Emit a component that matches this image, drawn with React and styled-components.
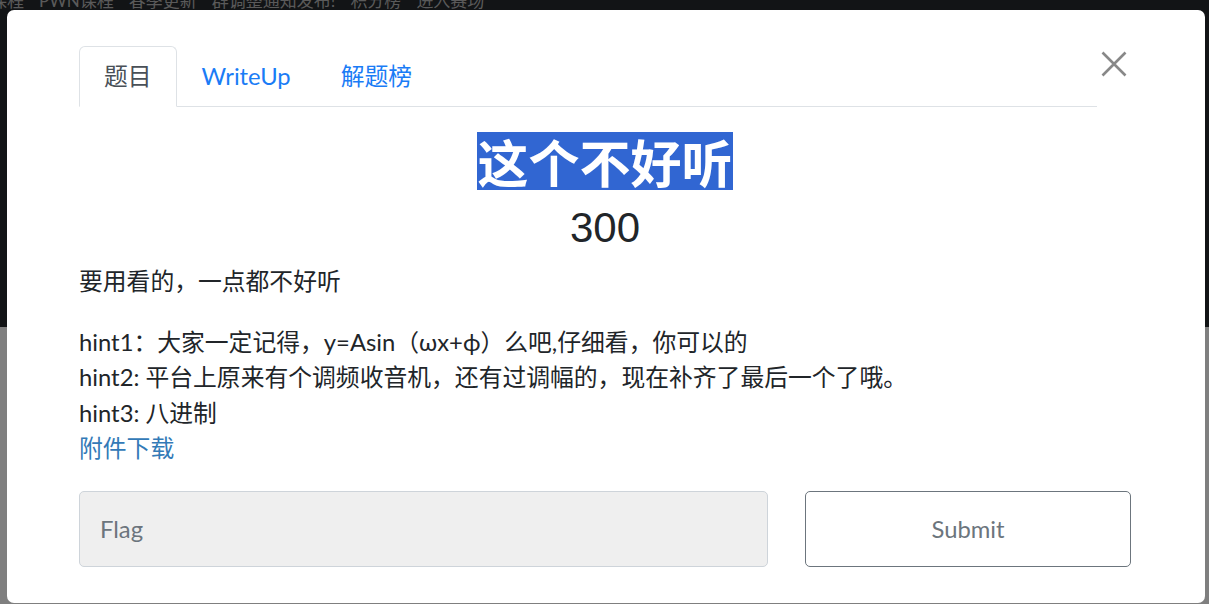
import React from 'react'
import styled, { createGlobalStyle } from 'styled-components'

const GlobalStyle = createGlobalStyle`
    html,
    body {
        margin: 0;
        padding: 0;
        height: 100%;
        overflow: hidden;
    }

    body {
        font-family: Lato, 'Noto Sans CJK SC', sans-serif;
        color: #212529;
        background: #ffffff;
    }
`

const Page = styled.div`
    height: 100vh;
    display: flex;
    flex-direction: column;
`

const Header = styled.header`
    height: 327px;
    background: #24282c;
    overflow: hidden;
`

const NavBar = styled.nav`
    display: flex;
    gap: 15px;
    margin: -8px 0 0 -10px;
    font-size: 17px;
    line-height: 17px;
    color: #b4b4b4;
`

const PageBody = styled.main`
    flex: 1;
    background: #ffffff;
`

const Backdrop = styled.div`
    position: fixed;
    inset: 0;
    background: rgba(0, 0, 0, 0.5);
`

const ModalWrap = styled.div`
    position: fixed;
    inset: 0;
    padding: 10px 4px 0 7px;
`

const Modal = styled.div`
    background: #ffffff;
    border-radius: 7px;
    padding: 36px 74px 36px 72px;
`

const ModalHeader = styled.div`
    display: flex;
    align-items: flex-start;
`

const TabList = styled.ul`
    flex: 1;
    display: flex;
    list-style: none;
    margin: 0;
    padding: 0;
    border-bottom: 1px solid #dee2e6;
`

const Tab = styled.li`
    margin-bottom: -1px;
    padding: 12px 24px;
    font-size: 23.8px;
    line-height: 35px;
    border: 1px solid transparent;
    border-radius: 6px 6px 0 0;
    color: ${(p) => (p.$active ? '#495057' : '#1a7cf6')};
    background: ${(p) => (p.$active ? '#ffffff' : 'transparent')};
    border-color: ${(p) => (p.$active ? '#dee2e6 #dee2e6 #ffffff' : 'transparent')};
    cursor: pointer;
`

const CloseButton = styled.button`
    width: 34px;
    height: 36px;
    padding: 0;
    border: 0;
    background: none;
    display: flex;
    align-items: center;
    justify-content: center;
    cursor: pointer;
`

const Title = styled.h2`
    margin: 25px 0 0;
    text-align: center;
    font-size: 51px;
    line-height: 58px;
    font-weight: 700;
    font-family: 'Noto Sans CJK SC', sans-serif;
`

const Highlight = styled.span`
    display: inline-block;
    vertical-align: top;
    background: #3166d2;
    color: #ffffff;
`

const Score = styled.div`
    margin-top: 12.5px;
    text-align: center;
    font-family: 'Liberation Sans', Arial, sans-serif;
    font-size: 42px;
    line-height: 50px;
    color: #212529;
`

const Description = styled.p`
    margin: 11px 0 0;
    font-size: 23.8px;
    line-height: 35px;
`

const Hints = styled.div`
    margin-top: 26px;
    font-size: 23.8px;
    line-height: 35.5px;
`

const Line = styled.div``

const Download = styled.a`
    display: block;
    color: #337ab7;
    text-decoration: none;
`

const FlagForm = styled.form`
    margin-top: 24.5px;
    display: flex;
    gap: 37px;
`

const FlagInput = styled.input`
    flex: 1;
    min-width: 0;
    height: 76px;
    box-sizing: border-box;
    padding: 0 20px;
    font-family: Lato, 'Noto Sans CJK SC', sans-serif;
    font-size: 23.8px;
    background: #efefef;
    border: 1px solid #ced4da;
    border-radius: 5px;
    color: #495057;
    outline: none;

    &::placeholder {
        color: #6c757d;
    }
`

const SubmitButton = styled.button`
    width: 326px;
    height: 76px;
    font-family: Lato, 'Noto Sans CJK SC', sans-serif;
    font-size: 23.8px;
    color: #6c757d;
    background: #ffffff;
    border: 1px solid #6c757d;
    border-radius: 5px;
    cursor: pointer;
`

const navItems = ['课程', 'PWN课程', '春季更新', '群调整通知发布!', '积分榜', '进入赛场']

const App = () => {
    return (
        <>
            <GlobalStyle />
            <Page>
                <Header>
                    <NavBar>
                        {navItems.map((item) => (
                            <span key={item}>{item}</span>
                        ))}
                    </NavBar>
                </Header>
                <PageBody />
            </Page>
            <Backdrop />
            <ModalWrap>
                <Modal>
                    <ModalHeader>
                        <TabList>
                            <Tab $active>题目</Tab>
                            <Tab>WriteUp</Tab>
                            <Tab>解题榜</Tab>
                        </TabList>
                        <CloseButton aria-label="Close">
                            <svg width="26" height="26" viewBox="0 0 26 26">
                                <path
                                    d="M1.5 1.5 L24.5 24.5 M24.5 1.5 L1.5 24.5"
                                    stroke="#888888"
                                    strokeWidth="2.6"
                                    fill="none"
                                />
                            </svg>
                        </CloseButton>
                    </ModalHeader>
                    <Title>
                        <Highlight>这个不好听</Highlight>
                    </Title>
                    <Score>300</Score>
                    <Description>要用看的，一点都不好听</Description>
                    <Hints>
                        <Line>hint1：大家一定记得，y=Asin（ωx+ϕ）么吧,仔细看，你可以的</Line>
                        <Line>hint2: 平台上原来有个调频收音机，还有过调幅的，现在补齐了最后一个了哦。</Line>
                        <Line>hint3: 八进制</Line>
                        <Download href="#">附件下载</Download>
                    </Hints>
                    <FlagForm onSubmit={(e) => e.preventDefault()}>
                        <FlagInput placeholder="Flag" />
                        <SubmitButton type="submit">Submit</SubmitButton>
                    </FlagForm>
                </Modal>
            </ModalWrap>
        </>
    )
}

export default App
